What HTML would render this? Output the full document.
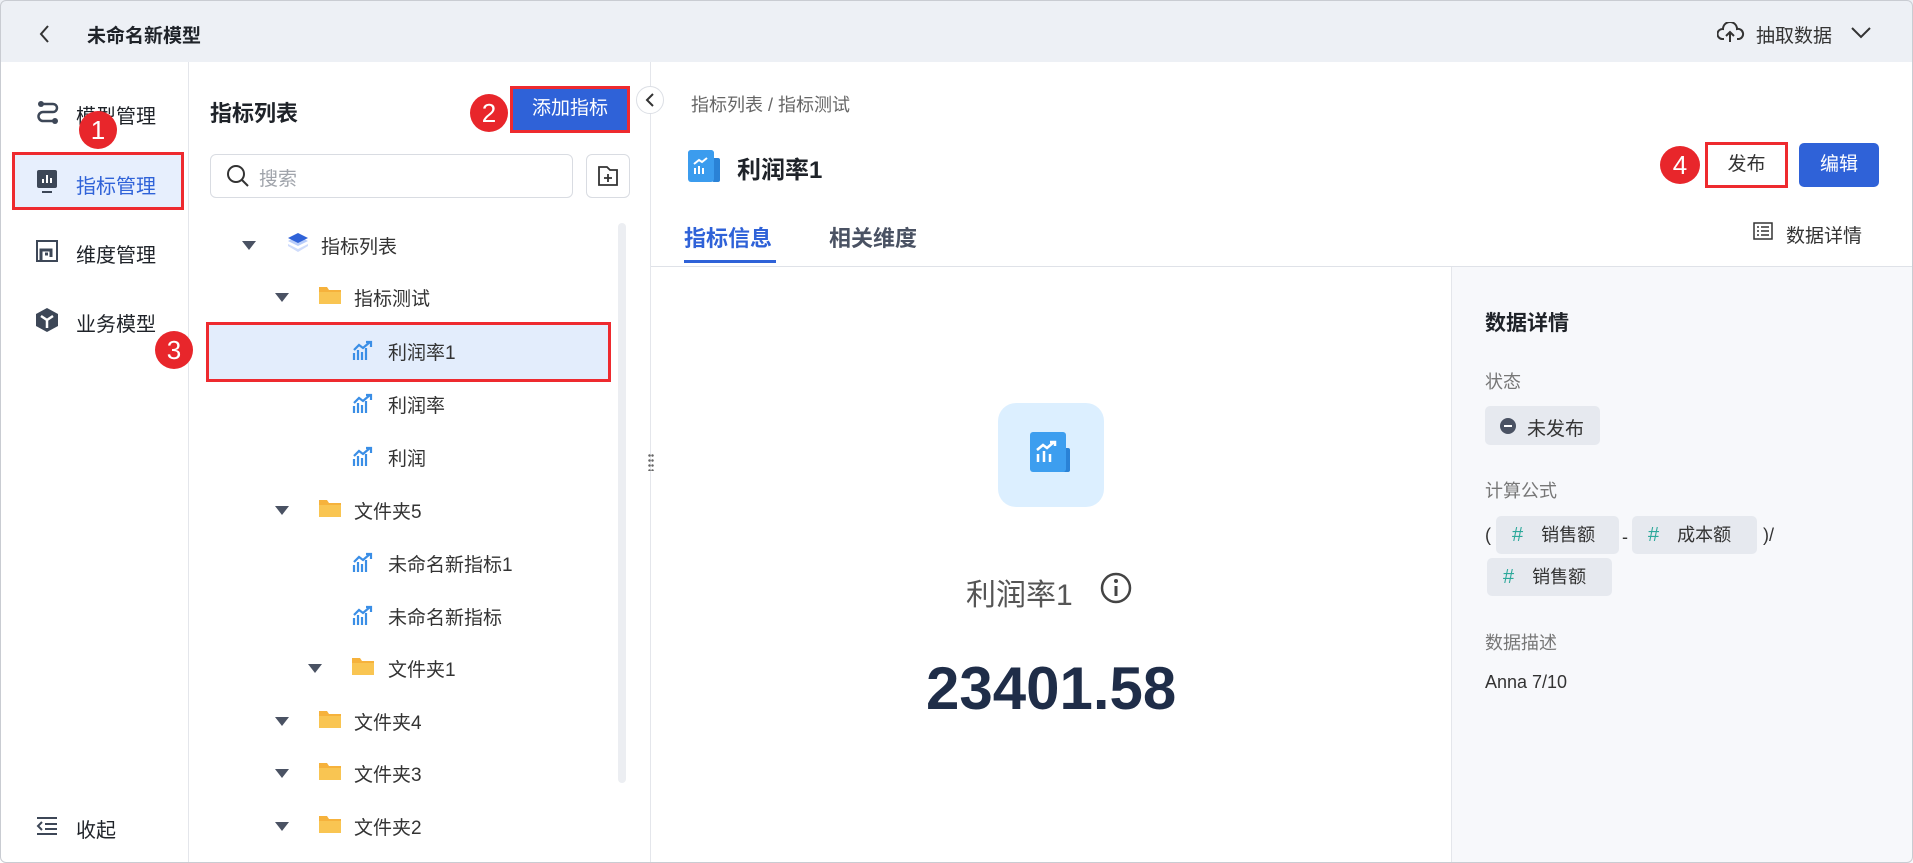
<!DOCTYPE html>
<html><head><meta charset="utf-8"><style>
*{box-sizing:border-box;margin:0;padding:0}
body{width:1913px;height:863px;overflow:hidden;background:#fff;font-family:"Liberation Sans","Noto Sans CJK SC",sans-serif;color:#1f2329;position:relative}
.a{position:absolute;white-space:nowrap}
.badge{position:absolute;width:38px;height:38px;border-radius:50%;background:#e8262b;color:#fff;font-size:26px;text-align:center;line-height:38px;font-family:"Liberation Sans",sans-serif}
.red{position:absolute;border:3px solid #ee2a2f}
.nav{font-size:20px;color:#1f2329}
.tree{font-size:19px;color:#333}
.tri{position:absolute;width:0;height:0;border-left:7px solid transparent;border-right:7px solid transparent;border-top:9px solid #4a5263}
.lbl{font-size:18px;color:#777}
.chip{position:absolute;height:38px;background:#e6e9ef;border-radius:5px;font-size:18px;color:#333;line-height:38px}
.chip b{color:#2ca89a;font-weight:normal;margin:0 18px 0 16px;font-size:20px}
</style></head><body>
<!-- top bar -->
<div class="a" style="left:0;top:0;width:1913px;height:62px;background:#edf0f5"></div>
<svg class="a" style="left:38px;top:24px" width="14" height="20"><path d="M10 2 L3 10 L10 18" stroke="#333" stroke-width="2" fill="none"/></svg>
<div class="a" style="left:87px;top:21px;font-size:19px;font-weight:bold;color:#1f2329">未命名新模型</div>
<svg class="a" style="left:1717px;top:22px" width="28" height="22"><path d="M7 17 H5 A5 5 0 0 1 6 7 A7 7 0 0 1 20 7 A5 5 0 0 1 22 17 H20 M13 20 V10 M9 14 L13 10 L17 14" stroke="#333" stroke-width="2" fill="none"/></svg>
<div class="a" style="left:1756px;top:21px;font-size:19px;color:#333">抽取数据</div>
<svg class="a" style="left:1850px;top:26px" width="22" height="14"><path d="M2 2 L11 11 L20 2" stroke="#333" stroke-width="2" fill="none"/></svg>
<!-- sidebar -->
<div class="a" style="left:188px;top:62px;width:1px;height:801px;background:#e4e6eb"></div>
<svg class="a" style="left:36px;top:100px" width="24" height="26"><circle cx="5" cy="4" r="3" fill="#3d4757"/><circle cx="19" cy="21" r="3" fill="#3d4757"/><path d="M5 4 H17 A4 4 0 0 1 17 12 H7 A4 4 0 0 0 7 21 H19" stroke="#3d4757" stroke-width="2.5" fill="none"/></svg>
<div class="a nav" style="left:76px;top:100px">模型管理</div>
<div class="a" style="left:14px;top:154px;width:168px;height:56px;background:#e7effd"></div>
<svg class="a" style="left:37px;top:170px" width="22" height="24"><rect x="0" y="0" width="20" height="18" rx="2" fill="#3d4757"/><path d="M6 13V9M10 13V5M14 13V8" stroke="#fff" stroke-width="2"/><rect x="5" y="21" width="10" height="2" fill="#3d4757"/></svg>
<div class="a nav" style="left:76px;top:170px;color:#2f62d8">指标管理</div>
<div class="red" style="left:12px;top:152px;width:172px;height:58px"></div>
<div class="badge" style="left:79px;top:111px">1</div>
<svg class="a" style="left:36px;top:240px" width="22" height="22"><rect x="1" y="1" width="20" height="20" fill="none" stroke="#3d4757" stroke-width="2"/><path d="M5 21V10H15V17M9 14H12" stroke="#3d4757" stroke-width="3" fill="none"/></svg>
<div class="a nav" style="left:76px;top:239px">维度管理</div>
<svg class="a" style="left:35px;top:307px" width="24" height="26"><path d="M12 1 L23 7 V19 L12 25 L1 19 V7 Z" fill="#3d4757"/><path d="M6 9 L12 13 L18 9 M12 13 V21" stroke="#fff" stroke-width="2.5" fill="none"/></svg>
<div class="a nav" style="left:76px;top:308px">业务模型</div>
<svg class="a" style="left:36px;top:816px" width="22" height="20"><path d="M1 2H21M9 8H21M9 13H21M1 18H21M6 6L2 10L6 14" stroke="#3d4757" stroke-width="2" fill="none"/></svg>
<div class="a nav" style="left:76px;top:814px">收起</div>
<!-- list panel -->
<div class="a" style="left:210px;top:96px;font-size:22px;font-weight:bold">指标列表</div>
<div class="a" style="left:512px;top:87px;width:116px;height:44px;background:#2f62d8;color:#fff;font-size:19px;line-height:44px;text-align:center">添加指标</div>
<div class="red" style="left:510px;top:86px;width:120px;height:47px"></div>
<div class="badge" style="left:470px;top:94px">2</div>
<div class="a" style="left:210px;top:154px;width:363px;height:44px;border:1px solid #d9dce2;border-radius:6px"></div>
<svg class="a" style="left:226px;top:164px" width="24" height="24"><circle cx="10" cy="10" r="8" stroke="#333" stroke-width="2" fill="none"/><path d="M16 16L22 22" stroke="#333" stroke-width="2"/></svg>
<div class="a" style="left:259px;top:164px;font-size:19px;color:#a0a4ab">搜索</div>
<div class="a" style="left:586px;top:154px;width:44px;height:44px;border:1px solid #d9dce2;border-radius:6px"></div>
<svg class="a" style="left:597px;top:165px" width="22" height="22"><path d="M2 2H10L13 5H20V20H2Z" stroke="#333" stroke-width="1.8" fill="none"/><path d="M11 9V17M7 13H15" stroke="#333" stroke-width="1.8"/></svg>
<div class="a" style="left:618px;top:223px;width:8px;height:560px;background:#eceef2;border-radius:4px"></div>
<div class="a" style="left:207px;top:323px;width:403px;height:58px;background:#e3edfc"></div>
<div class="red" style="left:206px;top:322px;width:405px;height:60px"></div>
<div class="badge" style="left:155px;top:331px">3</div>
<!-- tree rows -->
<div class="tri" style="left:242px;top:241px"></div>
<svg class="a" style="left:287px;top:232px" width="22" height="22"><path d="M11 14L1 9L11 4L21 9Z" fill="#b9cdfa"/><path d="M11 11L1 6L11 1L21 6Z" fill="#2f62d8"/><path d="M1 12L11 17L21 12L21 14L11 20L1 14Z" fill="#cfdcfb"/></svg>
<div class="a tree" style="left:321px;top:232px">指标列表</div>
<div id="rows"></div>
<div class="tri" style="left:275px;top:293px"></div>
<svg class="a" style="left:318px;top:284px" width="24" height="22"><path d="M1 3H9L11 6H23V20H1Z" fill="#f6b23c"/><path d="M1 8H23V20H1Z" fill="#f9c552"/></svg>
<div class="a tree" style="left:354px;top:284px">指标测试</div>
<svg class="a" style="left:352px;top:340px" width="22" height="22"><path d="M2 20V13M6 20V10M10 20V12M14 20V8M2 10L7 5L11 8L18 2M14 2H19V7" stroke="#3a8ee6" stroke-width="2.2" fill="none"/></svg>
<div class="a tree" style="left:388px;top:338px">利润率1</div>
<svg class="a" style="left:352px;top:393px" width="22" height="22"><path d="M2 20V13M6 20V10M10 20V12M14 20V8M2 10L7 5L11 8L18 2M14 2H19V7" stroke="#3a8ee6" stroke-width="2.2" fill="none"/></svg>
<div class="a tree" style="left:388px;top:391px">利润率</div>
<svg class="a" style="left:352px;top:446px" width="22" height="22"><path d="M2 20V13M6 20V10M10 20V12M14 20V8M2 10L7 5L11 8L18 2M14 2H19V7" stroke="#3a8ee6" stroke-width="2.2" fill="none"/></svg>
<div class="a tree" style="left:388px;top:444px">利润</div>
<div class="tri" style="left:275px;top:506px"></div>
<svg class="a" style="left:318px;top:497px" width="24" height="22"><path d="M1 3H9L11 6H23V20H1Z" fill="#f6b23c"/><path d="M1 8H23V20H1Z" fill="#f9c552"/></svg>
<div class="a tree" style="left:354px;top:497px">文件夹5</div>
<svg class="a" style="left:352px;top:552px" width="22" height="22"><path d="M2 20V13M6 20V10M10 20V12M14 20V8M2 10L7 5L11 8L18 2M14 2H19V7" stroke="#3a8ee6" stroke-width="2.2" fill="none"/></svg>
<div class="a tree" style="left:388px;top:550px">未命名新指标1</div>
<svg class="a" style="left:352px;top:605px" width="22" height="22"><path d="M2 20V13M6 20V10M10 20V12M14 20V8M2 10L7 5L11 8L18 2M14 2H19V7" stroke="#3a8ee6" stroke-width="2.2" fill="none"/></svg>
<div class="a tree" style="left:388px;top:603px">未命名新指标</div>
<div class="tri" style="left:308px;top:664px"></div>
<svg class="a" style="left:351px;top:655px" width="24" height="22"><path d="M1 3H9L11 6H23V20H1Z" fill="#f6b23c"/><path d="M1 8H23V20H1Z" fill="#f9c552"/></svg>
<div class="a tree" style="left:388px;top:655px">文件夹1</div>
<div class="tri" style="left:275px;top:717px"></div>
<svg class="a" style="left:318px;top:708px" width="24" height="22"><path d="M1 3H9L11 6H23V20H1Z" fill="#f6b23c"/><path d="M1 8H23V20H1Z" fill="#f9c552"/></svg>
<div class="a tree" style="left:354px;top:708px">文件夹4</div>
<div class="tri" style="left:275px;top:769px"></div>
<svg class="a" style="left:318px;top:760px" width="24" height="22"><path d="M1 3H9L11 6H23V20H1Z" fill="#f6b23c"/><path d="M1 8H23V20H1Z" fill="#f9c552"/></svg>
<div class="a tree" style="left:354px;top:760px">文件夹3</div>
<div class="tri" style="left:275px;top:822px"></div>
<svg class="a" style="left:318px;top:813px" width="24" height="22"><path d="M1 3H9L11 6H23V20H1Z" fill="#f6b23c"/><path d="M1 8H23V20H1Z" fill="#f9c552"/></svg>
<div class="a tree" style="left:354px;top:813px">文件夹2</div>
<!-- divider and collapse -->
<div class="a" style="left:650px;top:62px;width:1px;height:801px;background:#e4e6eb"></div>
<div class="a" style="left:636px;top:86px;width:28px;height:28px;border-radius:50%;background:#fff;border:1px solid #dcdfe5"></div>
<svg class="a" style="left:644px;top:92px" width="12" height="16"><path d="M9 2L3 8L9 14" stroke="#333" stroke-width="2" fill="none"/></svg>
<div class="a" style="left:648px;top:453px;width:6px;height:18px;background:radial-gradient(circle,#666 1px,transparent 1.5px) 0 0/3px 5px"></div>
<!-- main -->
<div class="a" style="left:691px;top:91px;font-size:18px;color:#666">指标列表 / 指标测试</div>
<svg class="a" style="left:688px;top:150px" width="34" height="32"><rect x="0" y="0" width="26" height="26" rx="3" fill="#4aa6f0"/><rect x="24" y="8" width="8" height="24" rx="2" fill="#2a82d6"/><rect x="0" y="0" width="26" height="32" rx="3" fill="#3b9cee"/><path d="M7 24V18M11 24V16M15 24V18M6 14L11 10L14 12L19 8" stroke="#fff" stroke-width="2" fill="none"/></svg>
<div class="a" style="left:737px;top:150px;font-size:24px;font-weight:bold">利润率1</div>
<div class="a" style="left:1706px;top:143px;width:81px;height:44px;border:1px solid #d9dce2;border-radius:4px;font-size:19px;line-height:42px;text-align:center;color:#333">发布</div>
<div class="red" style="left:1705px;top:142px;width:83px;height:46px"></div>
<div class="badge" style="left:1660px;top:146px;width:40px;height:38px">4</div>
<div class="a" style="left:1799px;top:143px;width:80px;height:44px;background:#2f62d8;border-radius:5px;color:#fff;font-size:19px;line-height:44px;text-align:center">编辑</div>
<div class="a" style="left:684px;top:221px;font-size:22px;font-weight:bold;color:#2f62d8">指标信息</div>
<div class="a" style="left:684px;top:260px;width:92px;height:3px;background:#2f62d8"></div>
<div class="a" style="left:829px;top:221px;font-size:22px;font-weight:bold;color:#4a5263">相关维度</div>
<svg class="a" style="left:1753px;top:222px" width="20" height="18"><rect x="1" y="1" width="18" height="16" fill="none" stroke="#333" stroke-width="1.5"/><path d="M4 5H6M8 5H16M4 9H6M8 9H16M4 13H6M8 13H16" stroke="#333" stroke-width="1.5"/></svg>
<div class="a" style="left:1786px;top:221px;font-size:19px;color:#333">数据详情</div>
<div class="a" style="left:651px;top:266px;width:1262px;height:1px;background:#dfe2e8"></div>
<div class="a" style="left:998px;top:403px;width:106px;height:104px;border-radius:18px;background:#dcefff"></div>
<svg class="a" style="left:1028px;top:430px" width="46" height="46"><rect x="34" y="18" width="8" height="24" rx="2" fill="#2a82d6"/><rect x="2" y="2" width="36" height="40" rx="3" fill="#3d9eef"/><path d="M10 32V24M16 32V21M22 32V24M9 20L15 15L19 18L26 12M22 12H27V16" stroke="#fff" stroke-width="2.5" fill="none"/></svg>
<div class="a" style="left:966px;top:570px;font-size:30px;color:#555">利润率1</div>
<svg class="a" style="left:1099px;top:571px" width="34" height="34"><circle cx="17" cy="17" r="14" stroke="#444" stroke-width="2.5" fill="none"/><circle cx="17" cy="10" r="2" fill="#444"/><path d="M17 15V25" stroke="#444" stroke-width="3"/></svg>
<div class="a" style="left:926px;top:654px;font-size:60px;font-weight:bold;color:#1f2d48">23401.58</div>
<!-- detail panel -->
<div class="a" style="left:1451px;top:267px;width:462px;height:596px;background:#f7f8fb;border-left:1px solid #e4e6eb"></div>
<div class="a" style="left:1485px;top:307px;font-size:21px;font-weight:bold">数据详情</div>
<div class="a lbl" style="left:1485px;top:368px">状态</div>
<div class="a" style="left:1485px;top:406px;width:115px;height:39px;background:#e6e9ef;border-radius:5px"></div>
<div class="a" style="left:1500px;top:418px;width:16px;height:16px;border-radius:50%;background:#4a5263"></div>
<div class="a" style="left:1504px;top:425px;width:8px;height:2px;background:#fff"></div>
<div class="a" style="left:1527px;top:414px;font-size:19px;color:#333">未发布</div>
<div class="a lbl" style="left:1485px;top:477px">计算公式</div>
<div class="a" style="left:1485px;top:525px;font-size:18px;color:#333">(</div>
<div class="chip" style="left:1496px;top:516px;width:123px"><b>#</b>销售额</div>
<div class="a" style="left:1622px;top:527px;font-size:18px;color:#333">-</div>
<div class="chip" style="left:1632px;top:516px;width:125px"><b>#</b>成本额</div>
<div class="a" style="left:1763px;top:525px;font-size:18px;color:#333">)/</div>
<div class="chip" style="left:1487px;top:558px;width:125px"><b>#</b>销售额</div>
<div class="a lbl" style="left:1485px;top:629px">数据描述</div>
<div class="a" style="left:1485px;top:672px;font-size:18px;color:#333">Anna 7/10</div>
<div class="a" style="left:0;top:0;width:1913px;height:863px;border:1px solid #c9ccd2;border-radius:6px;pointer-events:none"></div>
</body></html>
